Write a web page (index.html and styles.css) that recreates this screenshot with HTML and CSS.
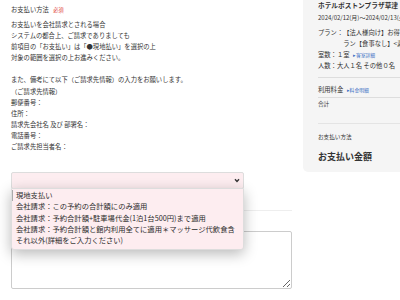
FILE: index.html
```html
<!DOCTYPE html>
<html lang="ja">
<head>
  <meta charset="UTF-8">
  <title>お支払い方法</title>
  <link rel="stylesheet" href="styles.css">
</head>
<body>
  <div class="page">
    <div class="main">
      <div class="field-label">お支払い方法 <span class="required">必須</span></div>
      <div class="note">
        お支払いを会社請求とされる場合<br>
        システムの都合上、ご請求でありましても<br>
        前項目の「お支払い」は「●現地払い」を選択の上<br>
        対象の範囲を選択の上お進みください。<br>
        <br>
        また、備考にて以下（ご請求先情報）の入力をお願いします。<br>
        （ご請求先情報）<br>
        郵便番号：<br>
        住所：<br>
        請求先会社名 及び 部署名：<br>
        電話番号：<br>
        ご請求先担当者名：
      </div>

      <div class="select-wrap">
        <div class="select">
          <svg class="chevron" width="6" height="5" viewBox="0 0 6 5"><polyline points="1,1.2 3,3.4 5,1.2" fill="none" stroke="#333" stroke-width="1.4"/></svg>
        </div>
        <ul class="options">
          <li class="current">現地支払い</li>
          <li>会社請求：この予約の合計額にのみ適用</li>
          <li>会社請求：予約合計額+駐車場代金(1泊1台500円)まで適用</li>
          <li>会社請求：予約合計額と館内利用全てに適用＊マッサージ代飲食含</li>
          <li>それ以外(詳細をご入力ください)</li>
        </ul>
      </div>

      <hr class="divider">
      <textarea class="remarks"></textarea>
    </div>

    <aside class="summary">
      <div class="hotel">ホテルボストンプラザ草津</div>
      <div class="dates">2024/02/12(月)〜2024/02/13(火)</div>
      <div class="plan">
        <span class="key">プラン：</span><span class="val">【法人様向け】お得なビジネスプラン【食事なし】&lt;素泊まり&gt;</span>
      </div>
      <div class="row">室数：１室 <a class="link">▸客室詳細</a></div>
      <div class="row">人数：大人１名 その他０名</div>
      <div class="sep"></div>
      <div class="row">利用料金 <a class="link">▸料金明細</a></div>
      <div class="sep thin"></div>
      <div class="row small">合計</div>
      <div class="sep gap"></div>
      <div class="row small">お支払い方法</div>
      <div class="total">お支払い金額</div>
    </aside>
  </div>
</body>
</html>
```

FILE: styles.css
```css
body {
  margin: 0;
  font-family: "Noto Sans CJK JP", "Noto Sans", sans-serif;
  color: #333;
  background: #fff;
  overflow: hidden;
}
.page { display: flex; width: 400px; height: 300px; overflow: hidden; }
.main { width: 281px; flex: none; padding: 4px 0 0 11px; }
.field-label { font-size: 6.3px; line-height: 11px; }
.required { color: #e03a3a; font-size: 5.2px; margin-left: 3px; }
.note { font-size: 6.3px; line-height: 11.1px; margin-top: 4px; }

.select-wrap { position: relative; width: 233px; margin-top: 20px; }
.select {
  height: 15px; background: #fdedf0; border: 1px solid #ddd; border-radius: 2px;
  position: relative;
}
.chevron { position: absolute; right: 3px; top: 5px; }
.options {
  position: absolute; top: 16px; left: 0; width: 231px;
  margin: 0; padding: 1px 0 2px 0; list-style: none;
  background: #fdedf0; border: 1px solid #ddd; border-radius: 0 0 3px 3px;
  box-shadow: 0 4px 14px rgba(0,0,0,0.28);
  z-index: 10;
}
.options li { font-size: 7.3px; line-height: 11.3px; padding-left: 4px; color: #2a2a2a; }
.options li.current { border-left: 1px solid #aaa; padding-left: 3px; }

.divider { border: none; border-top: 1px solid #eee; margin: 21px 0 0 0; }
.remarks {
  display: block; box-sizing: border-box; width: 281px; height: 58px;
  margin-top: 20px; border: 1px solid #ccc; border-radius: 2px; background: #fff;
}

.summary {
  flex: none; width: 150px; height: 172px; margin-left: 11px;
  box-sizing: border-box; padding: 0 0 0 15px;
  background: #f5f5f5; border-radius: 0 0 0 5px;
  font-size: 6.3px; line-height: 11px; white-space: nowrap;
}
.hotel { font-weight: bold; font-size: 6.7px; line-height: 10px; }
.dates { font-size: 6px; line-height: 11px; margin-top: 2px; }
.plan { display: flex; margin-top: 4px; white-space: normal; }
.plan .key { flex: none; }
.plan .val { width: 96px; flex: none; margin-left: -5px; padding-left: 5px; }
.row { line-height: 11px; }
.link { color: #3b6fc4; font-size: 4.8px; margin-left: 2px; }
.sep { border-top: 1px solid #ddd; margin: 6px 0 6px 0; }
.sep.thin { margin: 2px 0 1px 0; }
.sep.gap { border-top-color: #e4e4e4; margin: 13px 0 8px 0; }
.small { font-size: 5.6px; }
.total { font-weight: bold; font-size: 9px; line-height: 12px; margin-top: 8px; }
```
